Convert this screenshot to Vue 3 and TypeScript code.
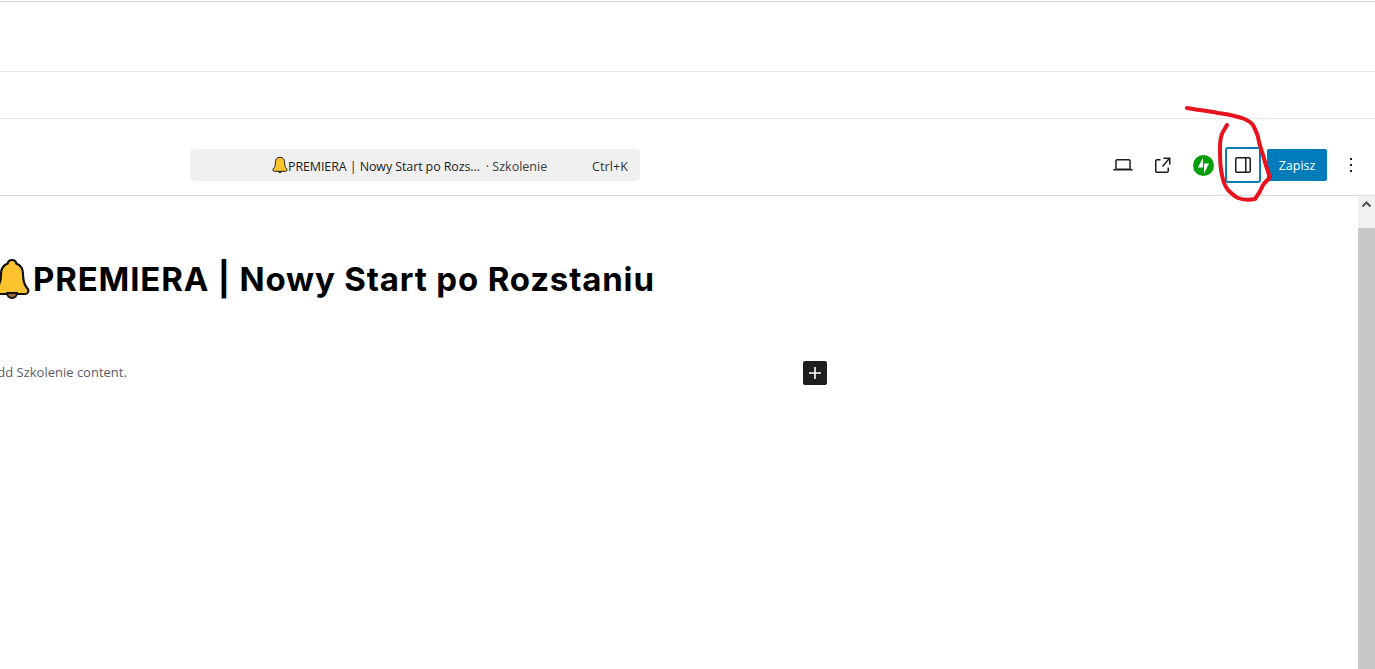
<script setup lang="ts">
const title = 'PREMIERA | Nowy Start po Rozstaniu'
const docTitle = 'PREMIERA | Nowy Start po Rozs...'
</script>

<template>
  <div class="page">
    <div class="top-edge"></div>
    <div class="bar-a"></div>
    <div class="bar-b"></div>
    <header class="toolbar">
      <div class="command">
        <div class="command-title">
          <svg class="bell-small" viewBox="0 0 16 18" width="16" height="18">
            <path d="M8 1.200c-3 0-4.600 2.400-4.600 5.200 0 3.600-.6 5-2.200 6.600-.7.8-.2 2.300 1 2.300h11.600c1.200 0 1.700-1.500 1-2.300-1.600-1.600-2.200-3-2.200-6.600 0-2.800-1.600-5.200-4.600-5.200z" fill="#fdc32f" stroke="#222" stroke-width="1" />
            <path d="M6.200 15.500a1.900 1.900 0 0 0 3.600 0z" fill="#a56a2b" stroke="#222" stroke-width=".8" />
          </svg>
          <span class="doc-title">{{ docTitle }}</span>
          <span class="post-type">· Szkolenie</span>
        </div>
        <span class="shortcut">Ctrl+K</span>
      </div>
      <div class="actions">
        <button class="icon-btn" aria-label="Podgląd">
          <svg viewBox="0 0 24 24" width="24" height="24"><path d="M20.500 16h-.7V8c0-1.100-.9-2-2-2H6.200c-1.100 0-2 .9-2 2v8h-.7c-.8 0-1.500.7-1.500 1.500h20c0-.8-.7-1.500-1.500-1.500zM5.700 8c0-.3.2-.5.5-.5h11.600c.3 0 .5.2.5.5v7.600H5.700V8z" fill="#1e1e1e" /></svg>
        </button>
        <button class="icon-btn" aria-label="Zobacz">
          <svg viewBox="0 0 24 24" width="24" height="24"><path d="M19.500 4.500h-7V6h4.440l-5.970 6.970 1.140.98L18 7.030V11.500h1.500zM6 6h3.500v1.500H6c-.28 0-.5.22-.5.5v10c0 .28.22.5.5.5h10c.28 0 .5-.22.5-.5v-3.500H18V18c0 1.100-.9 2-2 2H6c-1.100 0-2-.9-2-2V8c0-1.100.9-2 2-2z" fill="#1e1e1e" /></svg>
        </button>
        <button class="icon-btn" aria-label="Jetpack">
          <svg viewBox="0 0 32 32" width="21" height="21"><circle cx="16" cy="16" r="16" fill="#069e08" /><path d="M15.200 19H7.500l7.700-15zM16.800 28V13h7.700z" fill="#fff" /></svg>
        </button>
        <button class="icon-btn outlined" aria-label="Ustawienia">
          <svg viewBox="0 0 24 24" width="24" height="24"><path d="M18 4H6c-1.100 0-2 .9-2 2v12c0 1.100.9 2 2 2h12c1.100 0 2-.9 2-2V6c0-1.100-.9-2-2-2zM5.500 18V6c0-.3.2-.5.5-.5h8v13H6c-.3 0-.5-.2-.5-.5zm13 0c0 .3-.2.5-.5.5h-2.500v-13H18c.3 0 .5.2.5.5z" fill="#1e1e1e" /></svg>
        </button>
        <button class="save">Zapisz</button>
        <button class="more" aria-label="Opcje">
          <svg viewBox="0 0 24 24" width="24" height="24"><path d="M13 19h-2v-2h2zm0-6h-2v-2h2zm0-6h-2V5h2z" fill="#1e1e1e" /></svg>
        </button>
      </div>
    </header>
    <div class="body">
      <main class="canvas">
        <h1 class="title">
          <svg class="bell-large" viewBox="0 0 36 42" width="36" height="42">
            <path d="M18 2c-2.500 0-4 1.600-4.300 3.500C9 7.300 7 11.300 7 16c0 8-1.500 11.500-4.500 14.500C.8 32.500 2 36 4.500 36h27c2.500 0 3.700-3.500 2-5.500C30.500 27.500 29 24 29 16c0-4.700-2-8.700-6.700-10.500C22 3.600 20.500 2 18 2z" fill="#fdc32f" stroke="#111" stroke-width="2.200" />
            <path d="M13 35a5 5 0 0 0 10 0z" fill="#a56a2b" stroke="#111" stroke-width="2" />
          </svg>
          <span>{{ title }}</span>
        </h1>
        <div class="block-row">
          <p class="placeholder">Add Szkolenie content.</p>
          <button class="inserter" aria-label="Dodaj blok">
            <svg viewBox="0 0 24 24" width="24" height="24"><path d="M18 11.200h-5.200V6h-1.600v5.200H6v1.600h5.200V18h1.600v-5.200H18z" fill="#fff" /></svg>
          </button>
        </div>
      </main>
      <aside class="scrollbar">
        <div class="arrow">
          <svg viewBox="0 0 17 17" width="17" height="17"><path d="M4.500 10.500 8.500 6.500l4 4" fill="none" stroke="#505050" stroke-width="2" /></svg>
        </div>
        <div class="thumb"></div>
      </aside>
    </div>
    <svg class="annotation" viewBox="0 0 1375 669" width="1375" height="669">
      <path d="M1187 108C1198 110 1208 111 1218 113 1227 114 1235 116 1242 118 1247 120 1251 122 1253 125 1255 129 1257 133 1258 137 1259 143 1261 149 1263 155 1265 162 1267 170 1270 177 1268 180 1265 182 1263 185 1261 190 1258 195 1255 199 1249 200 1243 200 1238 198 1234 196 1231 193 1228 190 1225 186 1223 181 1222 175 1220 167 1220 158 1220 150 1220 145 1220 141 1221 137 1222 132 1225 129 1227 125" fill="none" stroke="#e8121c" stroke-width="4" stroke-linecap="round" stroke-linejoin="round" />
    </svg>
  </div>
</template>

<style>
html, body { margin: 0; background: #fff; overflow: hidden; }
</style>

<style scoped>
.page {
  position: relative;
  width: 1375px;
  height: 669px;
  overflow: hidden;
  background: #fff;
  display: flex;
  flex-direction: column;
  font-family: "Open Sans", "Noto Sans", sans-serif;
  color: #1e1e1e;
}
.top-edge { height: 1px; flex: none; border-bottom: 1px solid #d0d0d0; }
.bar-a { height: 69px; flex: none; border-bottom: 1px solid #e4e4e4; }
.bar-b { height: 46px; flex: none; border-bottom: 1px solid #e8e8e8; }
.toolbar {
  height: 62px;
  flex: none;
  display: flex;
  align-items: flex-end;
  justify-content: space-between;
  border-bottom: 1px solid #dcdcdc;
  padding: 0 8px 14px 190px;
}
.command {
  width: 450px;
  height: 32px;
  box-sizing: border-box;
  padding-top: 2px;
  border-radius: 4px;
  background: #f0f0f0;
  display: flex;
  align-items: center;
  position: relative;
  font-size: 12.500px;
}
.command-title {
  display: flex;
  align-items: center;
  margin-left: 82px;
  white-space: nowrap;
}
.bell-small { flex: none; margin-top: -2px; }
.doc-title { letter-spacing: -0.11px; }
.post-type { margin-left: 6px; color: #3c3c3c; }
.shortcut { position: absolute; right: 12px; color: #333; letter-spacing: .1px; }
.actions { display: flex; align-items: center; height: 32px; }
.icon-btn, .more {
  width: 32px;
  height: 32px;
  padding: 0;
  margin-left: 8px;
  border: 0;
  background: none;
  display: flex;
  align-items: center;
  justify-content: center;
}
.icon-btn.outlined {
  width: 36px;
  height: 36px;
  margin-left: 6px;
  border: 2px solid #0a7cba;
  border-radius: 3px;
  box-sizing: border-box;
  flex: none;
}
.save {
  width: 60px;
  height: 32px;
  margin-left: 6px;
  padding: 0;
  border: 0;
  border-radius: 2px;
  background: #007cba;
  color: #fff;
  font: 12.500px "Open Sans", sans-serif;
}
.more { margin-left: 8px; }
.body { flex: 1; min-height: 0; display: flex; }
.canvas { flex: 1; min-width: 0; position: relative; }
.title {
  margin: 58px 0 0 -6px;
  display: flex;
  align-items: center;
  height: 50px;
  font: 700 33px "Inter", "Noto Sans", sans-serif;
  letter-spacing: .83px;
  color: #000;
  white-space: nowrap;
}
.bell-large { flex: none; margin-right: 3px; }
.block-row {
  display: flex;
  align-items: center;
  margin-top: 56px;
  height: 26px;
  position: relative;
}
.placeholder {
  margin: 0 0 0 -11px;
  padding-bottom: 2px;
  font-size: 13px;
  color: #5c5c68;
  white-space: nowrap;
}
.inserter {
  position: absolute;
  left: 803px;
  top: 1px;
  width: 24px;
  height: 24px;
  padding: 0;
  border: 0;
  border-radius: 2px;
  background: #1e1e1e;
  display: flex;
}
.scrollbar { width: 17px; flex: none; background: #f1f1f1; display: flex; flex-direction: column; }
.arrow { height: 17px; display: flex; }
.thumb { margin-top: 15px; flex: 1; background: #c8c8c8; }
.annotation { position: absolute; left: 0; top: 0; pointer-events: none; }
</style>
